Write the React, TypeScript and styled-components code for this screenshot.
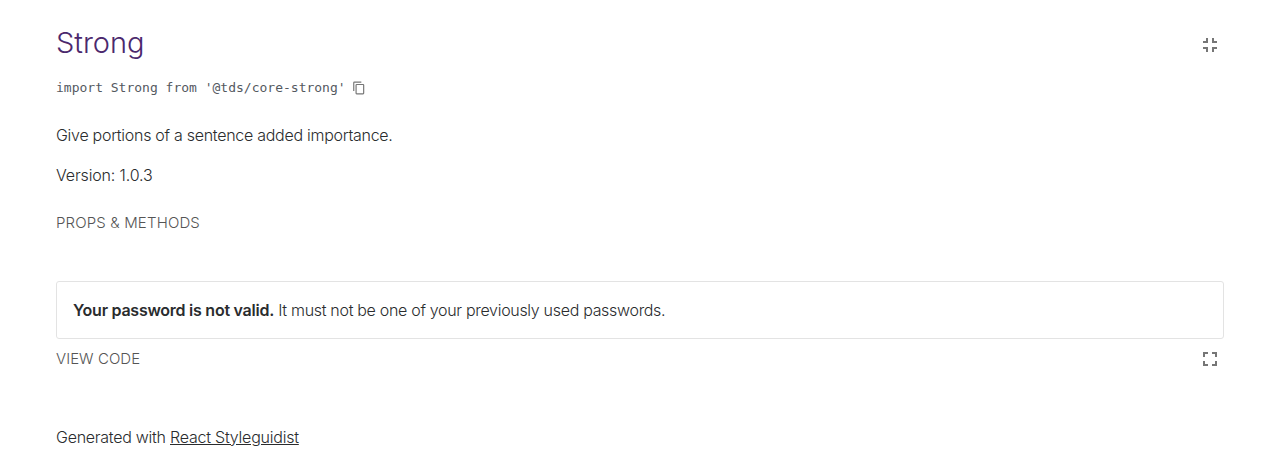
import React from 'react';
import styled, { createGlobalStyle } from 'styled-components';

const Global = createGlobalStyle`
  * { box-sizing: border-box; }
  body { margin: 0; background: #fff; color: #2a2c2e; font: 300 16px/24px Inter, "Liberation Sans", sans-serif; }
`;
const Page = styled.main`padding: 23px 56px 0; height: 465px; overflow: hidden;`;
const Bar = styled.div`display: flex; align-items: center; justify-content: space-between; height: 40px;`;
const Title = styled.h1`margin: 0; font-size: 29px; line-height: 40px; font-weight: 300; color: #4b286d;`;
const Fit = styled.span<{ $spacing: number }>`letter-spacing: ${p => p.$spacing}px; white-space: nowrap;`;
const IconButton = styled.button<{ $drop?: number }>`border: 0; padding: 0; margin: ${p => p.$drop ?? 0}px 2px 0 0; background: none; width: 24px; height: 24px; color: #767676; svg { display: block; }`;
const ImportLine = styled.div`display: flex; align-items: center; height: 20px; margin-top: 15px; color: #54595f; font: 13px/20px "DejaVu Sans Mono", monospace; svg { margin-left: 6px; color: #767676; }`;
const Description = styled.p`margin: 25px 0 0;`;
const Version = styled.p`margin: 16px 0 0;`;
const Tab = styled.button`border: 0; padding: 0; background: none; color: #555; font: 300 15px/24px Inter, "Liberation Sans", sans-serif; text-transform: uppercase;`;
const PropsRow = styled.div`display: flex; margin-top: 24px; height: 24px;`;
const Preview = styled.section`margin-top: 46px; height: 58px; padding: 16px; border: 1px solid #e3e3e3; border-radius: 3px;`;
const Strong = styled.strong`font-weight: 600;`;
const Footer = styled.footer`margin-top: 46px;`;
const Link = styled.a`color: inherit; text-decoration: underline; letter-spacing: -0.22px;`;

export default function App() {
  return <><Global /><Page>
    <Bar><Title><Fit $spacing={-0.05}>Strong</Fit></Title><IconButton $drop={4} aria-label="Collapse"><svg width="24" height="24" viewBox="0 0 24 24" fill="currentColor"><path d="M5 16h3v3h2v-5H5v2zm3-8H5v2h5V5H8v3zm6 11h2v-3h3v-2h-5v5zm2-11V5h-2v5h5V8h-3z" /></svg></IconButton></Bar>
    <ImportLine><span>import Strong from '@tds/core-strong'</span><svg width="14" height="14" viewBox="0 0 24 24" fill="currentColor"><path d="M16 1H4a2 2 0 0 0-2 2v14h2V3h12V1zm3 4H8a2 2 0 0 0-2 2v14a2 2 0 0 0 2 2h11a2 2 0 0 0 2-2V7a2 2 0 0 0-2-2zm0 16H8V7h11v14z" /></svg></ImportLine>
    <Description><Fit $spacing={-0.28}>Give portions of a sentence added importance.</Fit></Description>
    <Version><Fit $spacing={-0.15}>Version: 1.0.3</Fit></Version>
    <PropsRow><Tab><Fit $spacing={0.15}>Props &amp; methods</Fit></Tab></PropsRow>
    <Preview><Strong><Fit $spacing={-0.25}>Your password is not valid.</Fit></Strong><Fit $spacing={-0.31}> It must not be one of your previously used passwords.</Fit></Preview>
    <Bar><Tab><Fit $spacing={0.05}>View code</Fit></Tab><IconButton aria-label="Expand"><svg width="24" height="24" viewBox="0 0 24 24" fill="currentColor"><path d="M7 14H5v5h5v-2H7v-3zm-2-4h2V7h3V5H5v5zm12 7h-3v2h5v-5h-2v3zM14 5v2h3v3h2V5h-5z" /></svg></IconButton></Bar>
    <Footer><Fit $spacing={-0.26}>Generated with <Link>React Styleguidist</Link></Fit></Footer>
  </Page></>;
}
